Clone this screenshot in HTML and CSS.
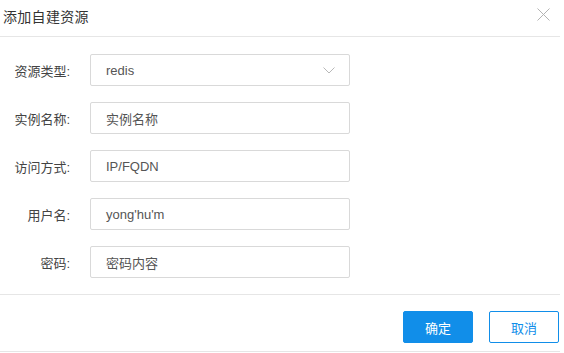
FILE: index.html
```html
<!DOCTYPE html>
<html lang="zh-CN">
<head>
  <meta charset="utf-8" />
  <title>添加自建资源</title>
  <link rel="stylesheet" href="styles.css">
</head>
<body>
  <div class="dialog">
    <div class="dialog-header">
      <span class="dialog-title">添加自建资源</span>
      <svg class="close-icon" width="13" height="13" viewBox="0 0 13 13">
        <path d="M0.5 0.5 L12.5 12.5 M12.5 0.5 L0.5 12.5" stroke="#b3b3b3" stroke-width="1" fill="none" />
      </svg>
    </div>

    <div class="dialog-body">
      <div class="form-row">
        <label class="form-label">资源类型:</label>
        <div class="form-input select">
          <span>redis</span>
          <svg class="chevron" width="12" height="7" viewBox="0 0 12 7">
            <path d="M0.5 0.5 L6 6 L11.5 0.5" stroke="#b8b8b8" stroke-width="1" fill="none" />
          </svg>
        </div>
      </div>
      <div class="form-row">
        <label class="form-label">实例名称:</label>
        <div class="form-input">实例名称</div>
      </div>
      <div class="form-row">
        <label class="form-label">访问方式:</label>
        <div class="form-input">IP/FQDN</div>
      </div>
      <div class="form-row">
        <label class="form-label">用户名:</label>
        <div class="form-input">yong'hu'm</div>
      </div>
      <div class="form-row">
        <label class="form-label">密码:</label>
        <div class="form-input">密码内容</div>
      </div>
    </div>

    <div class="dialog-footer">
      <button type="button" class="btn btn-primary">确定</button>
      <button type="button" class="btn btn-default">取消</button>
    </div>
  </div>
</body>
</html>
```

FILE: styles.css
```css
body {
  margin: 0;
  background-color: #fff;
  font-family: "Liberation Sans", "Noto Sans CJK SC", sans-serif;
  color: #444;
}
.dialog {
  width: 560px;
  background-color: #fff;
}
.dialog-header {
  height: 36px;
  display: flex;
  align-items: center;
  justify-content: space-between;
  padding: 0 10px 0 3px;
  border-bottom: 1px solid #e6e6e6;
}
.dialog-title {
  font-size: 14px;
  color: #333;
  letter-spacing: 0.3px;
  margin-top: -5px;
}
.close-icon {
  margin-top: -8px;
}
.dialog-body {
  padding: 17px 0 16px;
  display: flex;
  flex-direction: column;
  gap: 16px;
}
.form-row {
  display: flex;
  align-items: center;
  height: 32px;
}
.form-label {
  width: 70px;
  text-align: right;
  font-size: 13px;
  color: #444;
}
.form-input {
  box-sizing: border-box;
  margin-left: 20px;
  width: 260px;
  height: 32px;
  border: 1px solid #d9d9d9;
  border-radius: 2px;
  padding: 0 15px;
  display: flex;
  align-items: center;
  font-size: 13px;
  color: #555;
}
.select {
  justify-content: space-between;
  padding-right: 14px;
}
.chevron {
  margin-top: 1px;
}
.dialog-footer {
  border-top: 1px solid #e6e6e6;
  border-bottom: 1px solid #e6e6e6;
  padding: 16px 1px 8px 0;
  display: flex;
  justify-content: flex-end;
  gap: 16px;
}
.btn {
  width: 70px;
  height: 32px;
  font-family: "Liberation Sans", "Noto Sans CJK SC", sans-serif;
  font-size: 13px;
  border-radius: 2px;
  cursor: pointer;
}
.btn-primary {
  background-color: #118ee9;
  border: 1px solid #118ee9;
  color: #fff;
}
.btn-default {
  background-color: #fff;
  border: 1px solid #118ee9;
  color: #118ee9;
}
```
